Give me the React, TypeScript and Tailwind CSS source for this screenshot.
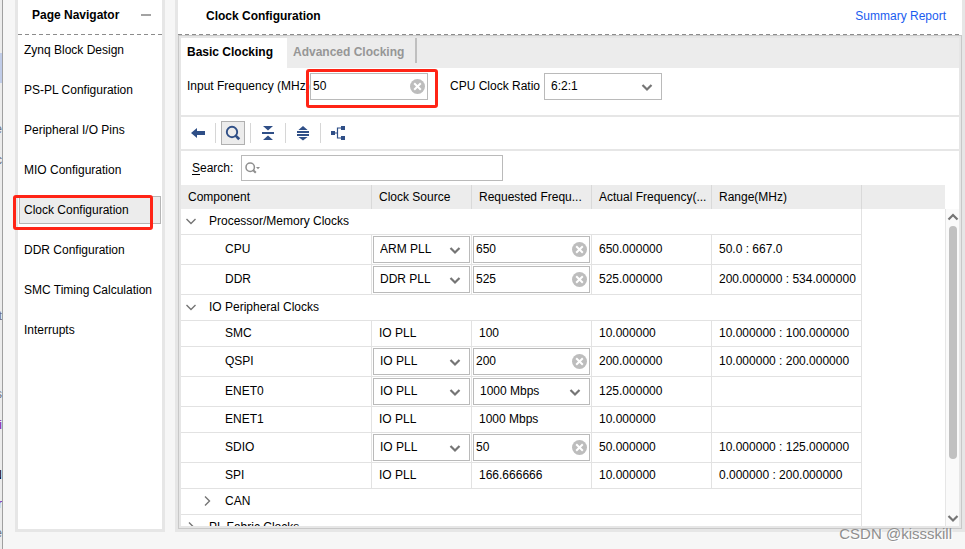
import { useState } from 'react';
import type { ReactNode } from 'react';

interface ClockRow {
  name: string;
  kind: 'group' | 'leaf' | 'node';
  open?: boolean;
  source?: string;
  sourceOptions?: string[];
  freq?: string;
  freqType?: 'input' | 'select' | 'text';
  actual?: string;
  range?: string;
}

const navItems = [
  'Zynq Block Design',
  'PS-PL Configuration',
  'Peripheral I/O Pins',
  'MIO Configuration',
  'Clock Configuration',
  'DDR Configuration',
  'SMC Timing Calculation',
  'Interrupts',
];

const plls = ['ARM PLL', 'DDR PLL', 'IO PLL'];

const rows: ClockRow[] = [
  { name: 'Processor/Memory Clocks', kind: 'group', open: true },
  { name: 'CPU', kind: 'leaf', source: 'ARM PLL', sourceOptions: plls, freq: '650', freqType: 'input', actual: '650.000000', range: '50.0 : 667.0' },
  { name: 'DDR', kind: 'leaf', source: 'DDR PLL', sourceOptions: ['DDR PLL'], freq: '525', freqType: 'input', actual: '525.000000', range: '200.000000 : 534.000000' },
  { name: 'IO Peripheral Clocks', kind: 'group', open: true },
  { name: 'SMC', kind: 'leaf', source: 'IO PLL', freq: '100', freqType: 'text', actual: '10.000000', range: '10.000000 : 100.000000' },
  { name: 'QSPI', kind: 'leaf', source: 'IO PLL', sourceOptions: plls, freq: '200', freqType: 'input', actual: '200.000000', range: '10.000000 : 200.000000' },
  { name: 'ENET0', kind: 'leaf', source: 'IO PLL', sourceOptions: plls, freq: '1000 Mbps', freqType: 'select', actual: '125.000000', range: '' },
  { name: 'ENET1', kind: 'leaf', source: 'IO PLL', freq: '1000 Mbps', freqType: 'text', actual: '10.000000', range: '' },
  { name: 'SDIO', kind: 'leaf', source: 'IO PLL', sourceOptions: plls, freq: '50', freqType: 'input', actual: '50.000000', range: '10.000000 : 125.000000' },
  { name: 'SPI', kind: 'leaf', source: 'IO PLL', freq: '166.666666', freqType: 'text', actual: '10.000000', range: '0.000000 : 200.000000' },
  { name: 'CAN', kind: 'node' },
  { name: 'PL Fabric Clocks', kind: 'group' },
];

// Sliver of the window behind, cut off by the dialog's left edge
const edgeLines = [
  { text: '', style: 'h-[53px]' },
  { text: '', style: 'h-[30px] bg-[#c0cce8]' },
  { text: '', style: 'h-[31px]' },
  { text: 'e', style: 'h-[30px] text-gray-500' },
  { text: 'c', style: 'h-[32px] text-gray-500' },
  { text: '', style: 'h-[125px]' },
  { text: 't', style: 'h-[30px] text-gray-500' },
  { text: '', style: 'h-[48px]' },
  { text: 's', style: 'h-[30px] text-gray-500' },
  { text: 'i', style: 'h-[31px] text-purple-800' },
  { text: '', style: 'h-[20px]' },
  { text: 'N', style: 'h-[30px] text-black' },
  { text: 'r', style: 'h-[28px] text-purple-800' },
  { text: 'e', style: 'h-[30px] text-gray-500' },
];

function Chevron({ dir, bold }: { dir: 'down' | 'right' | 'up'; bold?: boolean }) {
  const d = {
    down: 'M1.5 4 L6 8.5 L10.5 4',
    up: 'M1.5 8.5 L6 4 L10.5 8.5',
    right: 'M4 1.5 L8.5 6 L4 10.5',
  }[dir];
  return (
    <svg width="12" height="12" viewBox="0 0 12 12" fill="none" stroke="#757575" strokeWidth={bold ? 2.2 : 1.4} aria-hidden="true">
      <path d={d} />
    </svg>
  );
}

function SelectBox({ id, label, value, options }: { id?: string; label?: string; value: string; options: string[] }) {
  return (
    <div className="relative h-[27px] w-full">
      <select
        id={id}
        aria-label={label}
        defaultValue={value}
        className="block h-full w-full appearance-none border border-[#bababa] bg-white pb-[2px] pl-[6px] pr-6 outline-none"
      >
        {options.map((o) => (
          <option key={o}>{o}</option>
        ))}
      </select>
      <span className="pointer-events-none absolute inset-y-0 right-[9px] flex items-center">
        <Chevron dir="down" bold />
      </span>
    </div>
  );
}

function ClearableInput({ id, label, initial }: { id?: string; label?: string; initial: string }) {
  const [value, setValue] = useState(initial);

  return (
    <div className="flex h-[27px] w-full items-center border border-[#bababa] bg-white pl-[2px] pr-[2px]">
      <input
        id={id}
        aria-label={label}
        value={value}
        onChange={(e) => setValue(e.target.value)}
        className="h-full w-0 min-w-0 flex-1 pb-[2px] outline-none"
      />
      <button type="button" aria-label="Clear" onClick={() => setValue('')}>
        <svg width="15" height="15" viewBox="0 0 15 15" className="block">
          <circle cx="7.5" cy="7.5" r="7.5" fill="#bdbdbd" />
          <path d="M4.2 4.2 L10.8 10.8 M10.8 4.2 L4.2 10.8" stroke="#fff" strokeWidth="2" />
        </svg>
      </button>
    </div>
  );
}

function ToolButton({ label, active, children }: { label: string; active?: boolean; children: ReactNode }) {
  return (
    <button
      type="button"
      aria-label={label}
      className={`flex size-6 items-center justify-center border ${active ? 'border-[#b0b0b0] bg-[#ececec]' : 'border-transparent'}`}
    >
      <svg width="16" height="16" viewBox="0 0 16 16" fill="#2f4f87">
        {children}
      </svg>
    </button>
  );
}

function Dashes() {
  return <div className="h-px shrink-0 bg-[repeating-linear-gradient(90deg,#8c8c8c_0_4px,transparent_4px_7px)]" />;
}

function PageNavigator() {
  const [selected, setSelected] = useState('Clock Configuration');

  return (
    <nav className="flex w-[150px] shrink-0 flex-col border-x-[3px] border-b-[3px] border-[#e6e6e6] bg-white">
      <div className="flex h-[34px] shrink-0 items-center justify-between pb-1 pl-[14px] pr-[11px]">
        <h2 className="font-bold">Page Navigator</h2>
        <button type="button" aria-label="Minimize" className="flex h-4 items-center">
          <span className="block h-[2px] w-[10px] bg-[#a3a3a3]" />
        </button>
      </div>
      <Dashes />
      <ul className="flex flex-col gap-3 px-px pt-px">
        {navItems.map((item) => (
          <li key={item} className="relative">
            <button
              type="button"
              onClick={() => setSelected(item)}
              className={`block h-7 w-full whitespace-nowrap border pl-1 text-left ${
                item === selected ? 'border-[#b5b5b5] bg-[#ececec]' : 'border-transparent'
              }`}
            >
              {item}
            </button>
            {item === 'Clock Configuration' && (
              <span className="pointer-events-none absolute -left-[6px] -top-px h-[35px] w-[140px] rounded-[3px] border-[3px] border-[#ff2416]" />
            )}
          </li>
        ))}
      </ul>
    </nav>
  );
}

function Toolbar() {
  return (
    <div className="flex h-8 shrink-0 items-center gap-[5px] pl-[5px]">
      <ToolButton label="Back">
        <path d="M1 8 L7 3 V6 H15 V10 H7 V13 Z" />
      </ToolButton>
      <span className="h-5 w-px bg-[#d6d6d6]" />
      <ToolButton label="Search" active>
        <circle cx="7" cy="7" r="5.2" fill="none" stroke="#2f4f87" strokeWidth="1.9" />
        <path d="M11.6 9.8 L15.2 13.2 L13.2 15.2 L9.8 11.6 Z" />
      </ToolButton>
      <span className="h-5 w-px bg-[#d6d6d6]" />
      <ToolButton label="Collapse all">
        <path d="M3 1 H13 L8 5.6 Z M2 7 H14 V9 H2 Z M8 10.4 L13 15 H3 Z" />
      </ToolButton>
      <span className="h-5 w-px bg-[#d6d6d6]" />
      <ToolButton label="Expand all">
        <path d="M8 1 L12.6 5 H3.4 Z M2 6 H14 V8 H2 Z M2 9 H14 V11 H2 Z M3.4 12 H12.6 L8 15.6 Z" />
      </ToolButton>
      <span className="h-5 w-px bg-[#d6d6d6]" />
      <ToolButton label="Hierarchy">
        <path d="M1 6 H5 V10 H1 Z M11 1 H15 V5 H11 Z M11 11 H15 V15 H11 Z" />
        <path d="M5 8 H7.5 M11 3 H7.5 V13 H11" fill="none" stroke="#2f4f87" strokeWidth="1.2" />
      </ToolButton>
    </div>
  );
}

function ClockTableRow({ row }: { row: ClockRow }) {
  if (row.kind !== 'leaf') {
    return (
      <tr>
        <td colSpan={5} className="h-[26px] border-b border-r border-[#e2e2e2] pb-[2px]">
          <div className={`flex items-center gap-3 ${row.kind === 'group' ? 'pl-1' : 'pl-5'}`}>
            <button type="button" aria-label={`Toggle ${row.name}`}>
              <Chevron dir={row.open ? 'down' : 'right'} />
            </button>
            {row.name}
          </div>
        </td>
        <td />
      </tr>
    );
  }

  const tall = Boolean(row.sourceOptions);
  const cell = 'border-b border-r border-[#e2e2e2]';
  const editable = tall ? 'p-px' : 'pb-[2px] pl-[7px]';

  return (
    <tr className={tall ? 'h-[30px]' : 'h-[26px]'}>
      <td className={`${cell} pb-[2px] pl-11`}>{row.name}</td>
      <td className={`${cell} ${editable}`}>
        {row.sourceOptions ? (
          <SelectBox label={`${row.name} clock source`} value={row.source!} options={row.sourceOptions} />
        ) : (
          row.source
        )}
      </td>
      <td className={`${cell} ${editable}`}>
        {row.freqType === 'input' && <ClearableInput label={`${row.name} frequency`} initial={row.freq!} />}
        {row.freqType === 'select' && (
          <SelectBox label={`${row.name} frequency`} value={row.freq!} options={['1000 Mbps', '100 Mbps', '10 Mbps']} />
        )}
        {row.freqType === 'text' && row.freq}
      </td>
      <td className={`${cell} pb-[2px] pl-[7px]`}>{row.actual}</td>
      <td className={`${cell} whitespace-nowrap pb-[2px] pl-[7px]`}>{row.range}</td>
      <td />
    </tr>
  );
}

function ClockTable() {
  const head = 'border-r border-[#d9d9d9] pl-[7px] text-left font-normal whitespace-nowrap';

  return (
    <div className="flex min-h-0 flex-1">
      <div className="min-w-0 flex-1 overflow-hidden">
        <table className="w-full table-fixed border-separate border-spacing-0">
          <colgroup>
            <col className="w-[191px]" />
            <col className="w-[100px]" />
            <col className="w-[120px]" />
            <col className="w-[120px]" />
            <col className="w-[150px]" />
            <col />
          </colgroup>
          <thead>
            <tr className="h-6 bg-[#ececec]">
              <th className={head}>Component</th>
              <th className={head}>Clock Source</th>
              <th className={head}>Requested Frequ...</th>
              <th className={head}>Actual Frequency(...</th>
              <th className={head}>Range(MHz)</th>
              <th />
            </tr>
          </thead>
          <tbody>
            {rows.map((row) => (
              <ClockTableRow key={row.name} row={row} />
            ))}
          </tbody>
        </table>
      </div>
      <div className="flex w-[14px] flex-col pt-6">
        <div className="flex min-h-0 flex-1 flex-col items-center border-l border-[#e6e6e6] bg-[#fafafa]">
          <span className="flex h-4 items-center">
            <Chevron dir="up" bold />
          </span>
          <div className="min-h-0 flex-1 pt-px">
            <div className="h-[82%] w-2 rounded-full bg-[#c1c1c1]" />
          </div>
          <span className="flex h-4 items-center">
            <Chevron dir="down" bold />
          </span>
        </div>
      </div>
    </div>
  );
}

export default function App() {
  const [tab, setTab] = useState('basic');

  return (
    <div className="relative flex h-screen overflow-hidden bg-[#f6f6f6] font-['Liberation_Sans',Arial,sans-serif] text-[12px] leading-4 text-black">
      <div className="flex w-[3px] shrink-0 flex-col overflow-hidden border-r border-[#a0a0a0] bg-[#ececec]" aria-hidden="true">
        {edgeLines.map((line, i) => (
          <div key={i} className={`flex shrink-0 items-center justify-end ${line.style}`}>
            {line.text}
          </div>
        ))}
      </div>

      <div className="flex min-w-0 flex-1 gap-[10px] pb-[17px] pl-3">
        <PageNavigator />

        <main className="flex min-w-0 flex-1 flex-col border-x-[3px] border-b-[3px] border-[#e6e6e6] bg-white">
          <div className="flex h-[34px] shrink-0 items-center justify-between pb-[3px] pl-7 pr-4">
            <h1 className="font-bold">Clock Configuration</h1>
            <a href="#summary" className="text-[#1a5cf0]">
              Summary Report
            </a>
          </div>
          <Dashes />
          <div className="flex min-h-0 flex-1 flex-col border border-[#c8c8c8]">
            <div className="flex min-h-0 flex-1 flex-col border-2 border-[#e6e6e6]">
              <div className="flex h-[30px] shrink-0 bg-[#ececec] font-bold" role="tablist">
                <button
                  type="button"
                  role="tab"
                  aria-selected={tab === 'basic'}
                  onClick={() => setTab('basic')}
                  className={`w-[106px] whitespace-nowrap pb-[2px] pl-[6px] text-left ${tab === 'basic' ? 'bg-white' : 'text-[#969696]'}`}
                >
                  Basic Clocking
                </button>
                <button
                  type="button"
                  role="tab"
                  aria-selected={tab === 'advanced'}
                  onClick={() => setTab('advanced')}
                  className={`w-32 whitespace-nowrap pb-[2px] pl-[6px] text-left ${tab === 'advanced' ? 'bg-white' : 'text-[#969696]'}`}
                >
                  Advanced Clocking
                </button>
                <span className="h-[25px] w-[2px] bg-[#bfbfbf]" />
              </div>

              <div className="flex shrink-0 items-center border-b-2 border-[#e6e6e6] pb-[15px] pl-[6px] pt-[5px]">
                <label htmlFor="input-freq" className="w-[123px] whitespace-nowrap pb-[2px]">
                  Input Frequency (MHz)
                </label>
                <div className="relative mr-[22px] w-[118px]">
                  <ClearableInput id="input-freq" initial="50" />
                  <span className="pointer-events-none absolute -left-1 -top-1 h-[39px] w-[132px] rounded-[3px] border-[3px] border-[#ff2416]" />
                </div>
                <label htmlFor="cpu-ratio" className="w-[94px] whitespace-nowrap pb-[2px]">
                  CPU Clock Ratio
                </label>
                <div className="w-[118px]">
                  <SelectBox id="cpu-ratio" value="6:2:1" options={['6:2:1', '4:2:1']} />
                </div>
              </div>

              <Toolbar />

              <div className="flex shrink-0 items-center border-t-2 border-[#e6e6e6] py-1 pl-[11px]">
                <label htmlFor="search" className="w-[49px]">
                  <span className="underline underline-offset-2">S</span>earch:
                </label>
                <div className="flex h-[26px] w-[262px] items-center border border-[#bababa] pl-[3px]">
                  <svg width="16" height="14" viewBox="0 0 16 14" fill="none" stroke="#8f8f8f" aria-hidden="true">
                    <circle cx="5.2" cy="6.2" r="4.2" strokeWidth="1.5" />
                    <path d="M8 9 L10.8 11.8" strokeWidth="2" />
                    <path d="M11 6 H15 L13 8.2 Z" fill="#8f8f8f" stroke="none" />
                  </svg>
                  <input id="search" className="h-full min-w-0 flex-1 pl-1 outline-none" />
                </div>
              </div>

              <ClockTable />
            </div>
          </div>
        </main>
      </div>

      <div className="pointer-events-none absolute bottom-[7px] right-[13px] text-[15px] text-[#8e8e8e] [text-shadow:1px_1px_0_#fff]">
        CSDN @kissskill
      </div>
    </div>
  );
}
